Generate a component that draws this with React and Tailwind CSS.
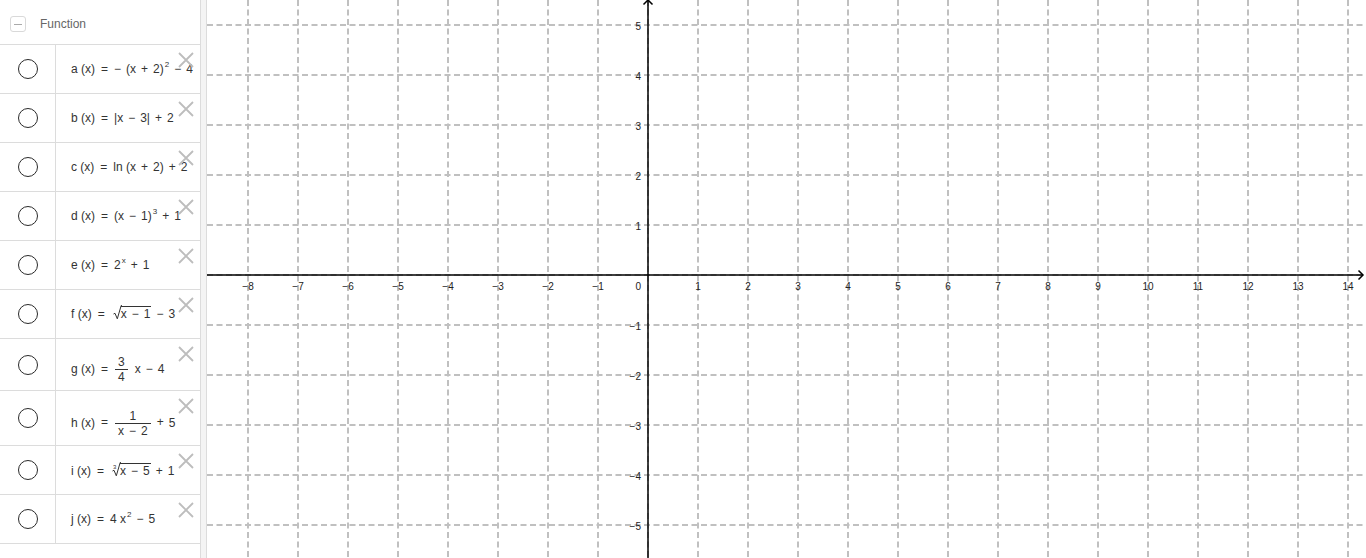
import React from "react";

const Op = ({ children }) => <span className="mx-[5px]">{children}</span>;
const Eq = () => <span className="mx-[6px]">=</span>;
const Sup = ({ children }) => (
  <sup className="text-[8px] top-[-6px] ml-[1px]">{children}</sup>
);

function Root({ children, n }) {
  return (
    <span className="relative inline-block pl-[8px] ml-[2px]">
      <svg className="absolute left-0 top-0" width="9" height="15" viewBox="0 0 9 15">
        <path d="M0.5 9 L2 8.3 L4.3 13.8 L8.2 0.5 L9 0.5" fill="none" stroke="#333" strokeWidth="1" />
      </svg>
      {n && (
        <span className="absolute left-[1px] top-[2px] text-[6px] leading-none">{n}</span>
      )}
      <span className="inline-block border-t border-[#333] leading-[14px] pr-[1px]">{children}</span>
    </span>
  );
}

function Frac({ num, den }) {
  return (
    <span className="inline-flex flex-col items-center align-middle mx-[1px]">
      <span className="leading-[14px] px-[3px]">{num}</span>
      <span className="leading-[14px] px-[3px] border-t border-[#333] w-full text-center">{den}</span>
    </span>
  );
}

const rows = [
  { h: "h-[49px]", p: "", f: <>a (x)<Eq />−<span className="ml-[5px]">(x</span><Op>+</Op>2)<Sup>2</Sup><Op>−</Op>4</> },
  { h: "h-[49px]", p: "", f: <>b (x)<Eq />|x<Op>−</Op>3|<Op>+</Op>2</> },
  { h: "h-[49px]", p: "", f: <>c (x)<Eq />ln (x<Op>+</Op>2)<Op>+</Op>2</> },
  { h: "h-[49px]", p: "", f: <>d (x)<Eq />(x<Op>−</Op>1)<Sup>3</Sup><Op>+</Op>1</> },
  { h: "h-[49px]", p: "", f: <>e (x)<Eq />2<Sup>x</Sup><Op>+</Op>1</> },
  { h: "h-[49px]", p: "", f: <>f (x)<Eq /><Root>x<Op>−</Op>1</Root><Op>−</Op>3</> },
  { h: "h-[52px]", p: "pt-[10px]", f: <>g (x)<Eq /><Frac num="3" den="4" /><span className="ml-[6px]">x</span><Op>−</Op>4</> },
  { h: "h-[55px]", p: "pt-[10px]", f: <>h (x)<Eq /><Frac num="1" den={<>x<Op>−</Op>2</>} /><Op>+</Op>5</> },
  { h: "h-[49px]", p: "pt-[2px]", f: <>i (x)<Eq /><Root n="3">x<Op>−</Op>5</Root><Op>+</Op>1</> },
  { h: "h-[49px]", p: "", f: <>j (x)<Eq />4 x<Sup>2</Sup><Op>−</Op>5</> },
];

function Row({ r }) {
  return (
    <div className={`relative flex shrink-0 border-b border-[#dcdcdc] ${r.h}`}>
      <div className="w-[56px] shrink-0 border-r border-[#dcdcdc] flex items-center justify-center">
        <div className="w-[20px] h-[20px] rounded-full border-[1.5px] border-[#2a2a2a]" />
      </div>
      <div className={`flex-1 flex items-center pl-[15px] text-[12px] text-[#333] whitespace-nowrap ${r.p}`}>
        <span>{r.f}</span>
      </div>
      <svg className="absolute left-[178px] top-[7px]" width="16" height="16" viewBox="0 0 16 16">
        <path d="M1 1 L15 15 M15 1 L1 15" stroke="#bdbdbd" strokeWidth="1.8" fill="none" />
      </svg>
    </div>
  );
}

function Graph() {
  const vx = [];
  for (let k = 0; k <= 22; k++) vx.push(248 + 50 * k);
  const hy = [];
  for (let k = 0; k <= 10; k++) hy.push(25 + 50 * k);
  const xl = [];
  for (let n = -8; n <= 14; n++) if (n !== 0) xl.push(n);
  const yl = [5, 4, 3, 2, 1, -1, -2, -3, -4, -5];
  const fmt = (n) => (n < 0 ? "\u2212" + Math.abs(n) : String(n));
  return (
    <svg width="1159" height="558" viewBox="207 0 1159 558" className="block">
      <g stroke="#c0c0c0" strokeWidth="2" strokeDasharray="6 3.5" fill="none">
        {vx.map((x) => (
          <line key={"v" + x} x1={x} y1={0} x2={x} y2={558} />
        ))}
        {hy.map((y) => (
          <line key={"h" + y} x1={207} y1={y} x2={1366} y2={y} />
        ))}
      </g>
      <g stroke="#000" strokeWidth="1.5" fill="none">
        <line x1={207} y1={275} x2={1363} y2={275} />
        <line x1={648} y1={0.5} x2={648} y2={558} />
        <path d="M1358.5 270.5 L1363 275 L1358.5 279.5" />
        <path d="M643.5 4.5 L648 0 L652.5 4.5" />
      </g>
      <g fontFamily="'Liberation Sans', Arial, sans-serif" fontSize="10" fill="#222">
        {xl.map((n) => (
          <text key={"x" + n} x={648 + 50 * n} y={290} textAnchor="middle">
            {fmt(n)}
          </text>
        ))}
        <text x={641} y={290} textAnchor="end">0</text>
        {yl.map((n) => (
          <text key={"y" + n} x={641} y={275 - 50 * n + 4.5} textAnchor="end">
            {fmt(n)}
          </text>
        ))}
      </g>
    </svg>
  );
}

export default function App() {
  return (
    <div className="w-[1366px] h-[558px] flex bg-white overflow-hidden font-['Liberation_Sans',Arial,sans-serif]">
      <div className="w-[200px] shrink-0 flex flex-col">
        <div className="h-[45px] shrink-0 flex items-center pt-[4px] border-b border-[#dcdcdc]">
          <div className="ml-[10px] w-[16px] h-[16px] rounded-[3px] border border-[#d9d9d9] flex items-center justify-center">
            <div className="w-[8px] h-[1px] bg-[#aaaaaa]" />
          </div>
          <span className="ml-[14px] text-[12px] text-[#666]">Function</span>
        </div>
        {rows.map((r, i) => (
          <Row key={i} r={r} />
        ))}
      </div>
      <div className="w-[7px] shrink-0 border-l border-r border-[#dcdcdc] bg-[#f4f4f4]" />
      <div className="flex-1">
        <Graph />
      </div>
    </div>
  );
}
